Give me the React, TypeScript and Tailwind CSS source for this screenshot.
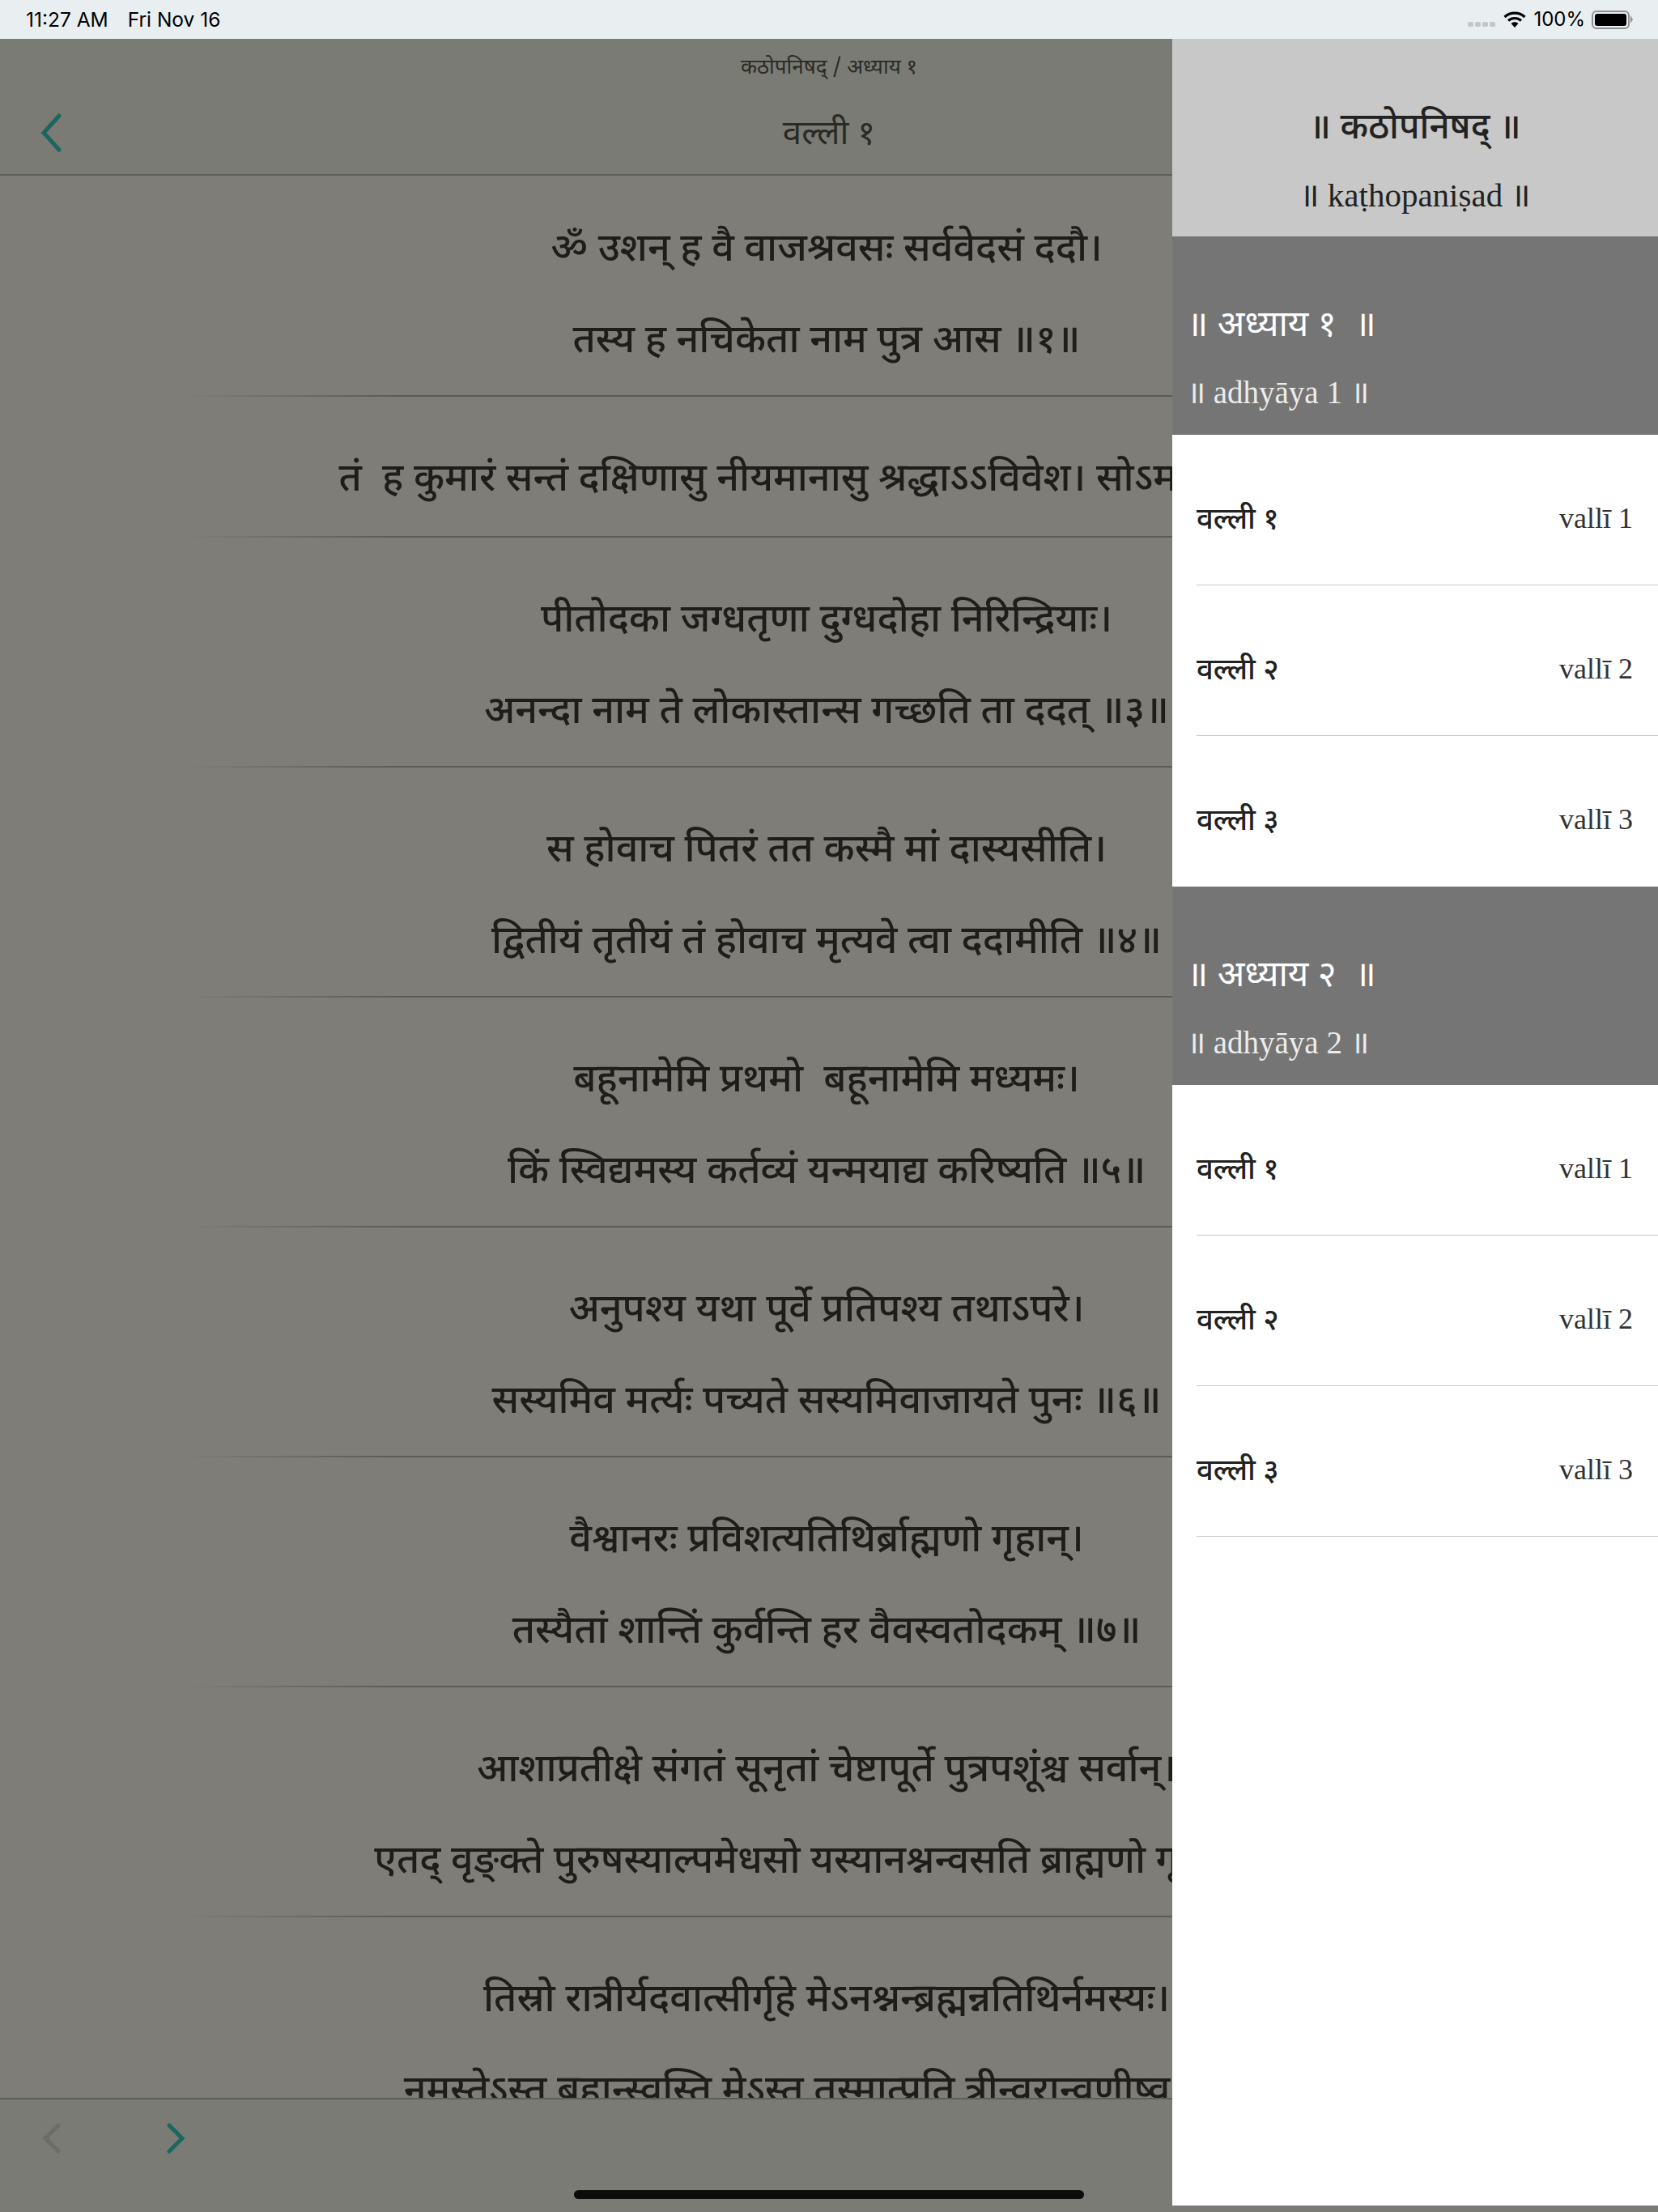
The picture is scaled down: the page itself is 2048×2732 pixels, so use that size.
import { Fragment } from "react";

const deva = "font-['Noto_Sans_Devanagari','Noto_Serif_Devanagari','Liberation_Serif',serif]";

const verses: string[][] = [
  ["ॐ उशन् ह वै वाजश्रवसः सर्ववेदसं ददौ।", "तस्य ह नचिकेता नाम पुत्र आस ॥१॥"],
  ["तं  ह कुमारं सन्तं दक्षिणासु नीयमानासु श्रद्धाऽऽविवेश। सोऽमन्यत ॥२॥"],
  ["पीतोदका जग्धतृणा दुग्धदोहा निरिन्द्रियाः।", "अनन्दा नाम ते लोकास्तान्स गच्छति ता ददत् ॥३॥"],
  ["स होवाच पितरं तत कस्मै मां दास्यसीति।", "द्वितीयं तृतीयं तं होवाच मृत्यवे त्वा ददामीति ॥४॥"],
  ["बहूनामेमि प्रथमो  बहूनामेमि मध्यमः।", "किं स्विद्यमस्य कर्तव्यं यन्मयाद्य करिष्यति ॥५॥"],
  ["अनुपश्य यथा पूर्वे प्रतिपश्य तथाऽपरे।", "सस्यमिव मर्त्यः पच्यते सस्यमिवाजायते पुनः ॥६॥"],
  ["वैश्वानरः प्रविशत्यतिथिर्ब्राह्मणो गृहान्।", "तस्यैतां शान्तिं कुर्वन्ति हर वैवस्वतोदकम् ॥७॥"],
  ["आशाप्रतीक्षे संगतं सूनृतां चेष्टापूर्ते पुत्रपशूंश्च सर्वान्।", "एतद् वृङ्क्ते पुरुषस्याल्पमेधसो यस्यानश्नन्वसति ब्राह्मणो गृहे ॥८॥"],
  ["तिस्रो रात्रीर्यदवात्सीर्गृहे मेऽनश्नन्ब्रह्मन्नतिथिर्नमस्यः।", "नमस्तेऽस्तु ब्रह्मन्स्वस्ति मेऽस्तु तस्मात्प्रति त्रीन्वरान्वृणीष्व ॥९॥"],
];

const sections = [
  {
    title: "॥ अध्याय १  ॥",
    sub: "॥ adhyāya 1 ॥",
    rows: [
      ["वल्ली १", "vallī 1"],
      ["वल्ली २", "vallī 2"],
      ["वल्ली ३", "vallī 3"],
    ],
  },
  {
    title: "॥ अध्याय २  ॥",
    sub: "॥ adhyāya 2 ॥",
    rows: [
      ["वल्ली १", "vallī 1"],
      ["वल्ली २", "vallī 2"],
      ["वल्ली ३", "vallī 3"],
    ],
  },
];

function Chevron({ dir, color, big }: { dir: "left" | "right"; color: string; big?: boolean }) {
  if (big) {
    return (
      <svg width="30" height="50" viewBox="0 0 30 50" fill="none">
        <path d="M25 4 L6 25 L25 46" stroke={color} strokeWidth="5" strokeLinecap="round" />
      </svg>
    );
  }
  return (
    <svg width="24" height="38" viewBox="0 0 24 38" fill="none">
      <path
        d={dir === "left" ? "M20 3 L4 19 L20 35" : "M4 3 L20 19 L4 35"}
        stroke={color}
        strokeWidth="5"
        strokeLinecap="round"
      />
    </svg>
  );
}

function StatusBar() {
  return (
    <div className="h-[48px] bg-[#e9eef1] flex items-center justify-between pl-[32px] pr-[31px] font-['Inter',sans-serif] text-[24.5px] text-black">
      <div className="flex gap-[24px]">
        <span>11:27 AM</span>
        <span>Fri Nov 16</span>
      </div>
      <div className="flex items-center text-[24px]">
        <div className="flex gap-[2px] mt-[11px] mr-[10px]">
          <span className="w-[7px] h-[6px] rounded-[2px] bg-[#c4c6c8]" />
          <span className="w-[7px] h-[6px] rounded-[2px] bg-[#c4c6c8]" />
          <span className="w-[7px] h-[6px] rounded-[2px] bg-[#c4c6c8]" />
          <span className="w-[7px] h-[6px] rounded-[2px] bg-[#c4c6c8]" />
        </div>
        <svg width="28" height="20" viewBox="0 0 28 20" fill="none">
          <path d="M1.5 7 C8.5 0.5 19.5 0.5 26.5 7" stroke="black" strokeWidth="3.2" />
          <path d="M6 11.5 C10.5 7.5 17.5 7.5 22 11.5" stroke="black" strokeWidth="3.2" />
          <path d="M9.5 15 C12 12.8 16 12.8 18.5 15 L14 20 Z" fill="black" />
        </svg>
        <span className="ml-[9px] mr-[8px]">100%</span>
        <div className="w-[47px] h-[23px] rounded-[6px] border-2 border-[#8e8f90] p-[2px]">
          <div className="w-full h-full rounded-[3px] bg-black" />
        </div>
        <span className="ml-[1px] w-0 h-0 border-y-[5px] border-y-transparent border-l-[3px] border-l-[#8e8f90]" />
      </div>
    </div>
  );
}

function Divider() {
  return (
    <div className="h-[2px] bg-[linear-gradient(to_right,transparent_11%,#5c5b57_24%)]" />
  );
}

function Reader() {
  return (
    <div className="h-[2684px] flex flex-col bg-[#7e7d78]">
      <div className="h-[169px] shrink-0 bg-[#7a7b75] border-b-2 border-[#5f5f5a] grid grid-cols-[1fr_auto_1fr] text-[#2a2a26] text-center">
        <div className="pl-[48px] pt-[91px]">
          <Chevron dir="left" color="#1b665e" big />
        </div>
        <div className={deva}>
          <div className="mt-[22px] h-[30px] leading-[30px] text-[26px]">कठोपनिषद् / अध्याय १</div>
          <div className="mt-[38px] h-[60px] leading-[60px] text-[42px]">वल्ली १</div>
        </div>
        <div />
      </div>
      <div className={`flex-1 overflow-hidden text-center text-[48.5px] font-medium leading-[113px] text-[#1e1d1a] whitespace-pre ${deva}`}>
        {verses.map((lines, i) => (
          <Fragment key={i}>
            <div className={`pr-[6px] ${i === 0 ? "pt-[37px] pb-[8px]" : lines.length === 1 ? "pt-[48px] pb-[11px]" : "pt-[48px] pb-[8px]"}`}>
              {lines.map((line) => (
                <div key={line}>{line}</div>
              ))}
            </div>
            <Divider />
          </Fragment>
        ))}
      </div>
      <div className="h-[141px] shrink-0 bg-[#7a7b75] border-t-2 border-[#5f5f5a] pt-[29px]">
        <div className="flex gap-[129px] pl-[52px] h-[38px]">
          <Chevron dir="left" color="#6c6c68" />
          <Chevron dir="right" color="#1b665e" />
        </div>
        <div className="mt-[45px] mx-auto w-[630px] h-[11px] rounded-full bg-[#0c0c0c]" />
      </div>
    </div>
  );
}

function Drawer() {
  return (
    <div className="absolute top-[48px] left-[1448px] w-[600px] h-[2676px] bg-white">
      <div className="h-[244px] bg-[#c8c8c8] pt-[83px] text-center text-[#222]">
        <div className={`h-[60px] leading-[60px] text-[44px] font-medium ${deva}`}>॥ कठोपनिषद् ॥</div>
        <div className="mt-[20px] h-[60px] leading-[60px] text-[41px] font-['Liberation_Serif',serif]">॥ kaṭhopaniṣad ॥</div>
      </div>
      {sections.map((s, si) => (
        <div key={s.title}>
          <div className="h-[245px] bg-[#757575] pt-[83px] pl-[18px] text-white">
            <div className={`h-[60px] leading-[60px] text-[44px] whitespace-pre ${deva}`}>{s.title}</div>
            <div className="mt-[20px] h-[60px] leading-[60px] text-[39px] text-[#ececec] font-['Liberation_Serif',serif]">{s.sub}</div>
          </div>
          <div className="pl-[30px]">
            {s.rows.map((r, ri) => (
              <div
                key={r[0]}
                className={`h-[186px] pt-[20px] flex items-center justify-between pr-[31px] border-b ${
                  si === 0 && ri === 2 ? "border-transparent" : "border-[#c8c8c8]"
                }`}
              >
                <span className={`mt-[10px] text-[36.5px] font-medium text-[#222] ${deva}`}>{r[0]}</span>
                <span className="text-[36px] text-[#333] font-['Liberation_Serif',serif]">{r[1]}</span>
              </div>
            ))}
          </div>
        </div>
      ))}
    </div>
  );
}

export default function App() {
  return (
    <div className="relative w-[2048px] h-[2732px] overflow-hidden">
      <StatusBar />
      <Reader />
      <Drawer />
    </div>
  );
}
